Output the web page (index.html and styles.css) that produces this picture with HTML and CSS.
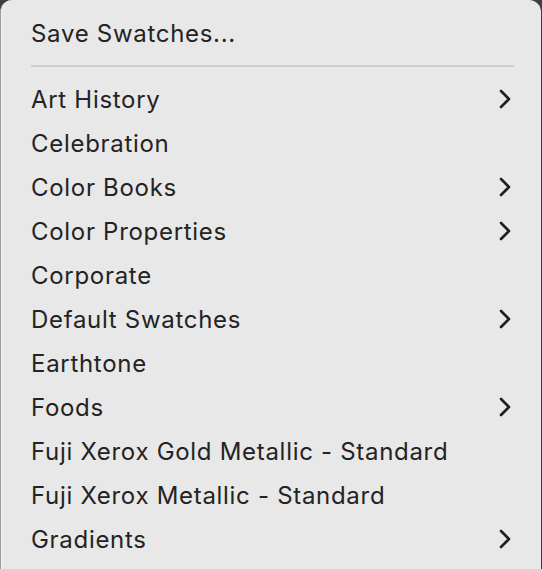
FILE: index.html
```html
<!DOCTYPE html>
<html>
<head>
<meta charset="utf-8">
<link rel="stylesheet" href="styles.css">
</head>
<body>
<div class="menu">
  <div class="item"><span>Save Swatches...</span></div>
  <div class="sep"></div>
  <div class="item"><span>Art History</span><svg class="chev" viewBox="0 0 12 20"><path d="M2 2 L10 10 L2 18"/></svg></div>
  <div class="item"><span>Celebration</span></div>
  <div class="item"><span>Color Books</span><svg class="chev" viewBox="0 0 12 20"><path d="M2 2 L10 10 L2 18"/></svg></div>
  <div class="item"><span>Color Properties</span><svg class="chev" viewBox="0 0 12 20"><path d="M2 2 L10 10 L2 18"/></svg></div>
  <div class="item"><span>Corporate</span></div>
  <div class="item"><span>Default Swatches</span><svg class="chev" viewBox="0 0 12 20"><path d="M2 2 L10 10 L2 18"/></svg></div>
  <div class="item"><span>Earthtone</span></div>
  <div class="item"><span>Foods</span><svg class="chev" viewBox="0 0 12 20"><path d="M2 2 L10 10 L2 18"/></svg></div>
  <div class="item"><span>Fuji Xerox Gold Metallic - Standard</span></div>
  <div class="item"><span>Fuji Xerox Metallic - Standard</span></div>
  <div class="item"><span>Gradients</span><svg class="chev" viewBox="0 0 12 20"><path d="M2 2 L10 10 L2 18"/></svg></div>
</div>
</body>
</html>
```

FILE: styles.css
```css
html, body {
  margin: 0;
  padding: 0;
  background: #3e3e3e;
  overflow: hidden;
  height: 100%;
}
.menu {
  width: 541px;
  height: 100%;
  overflow: hidden;
  box-sizing: border-box;
  background: #e8e8e8;
  border-radius: 12px 12px 0 0;
  border-left: 1px solid #9a9a9a;
  box-shadow: inset 1px 0 0 #f4f4f4;
  padding: 11px 0 0 30px;
  font-family: Inter, "Liberation Sans", sans-serif;
  font-size: 24px;
  letter-spacing: 0.7px;
  color: #232323;
}
.item {
  height: 44px;
  display: flex;
  align-items: center;
  justify-content: space-between;
  padding-right: 30px;
}
.sep {
  height: 22px;
  display: flex;
  align-items: center;
  margin-right: 27px;
}
.sep::before {
  content: "";
  flex: 1;
  height: 2px;
  background: #cdcdcd;
}
.chev {
  width: 12px;
  height: 20px;
  fill: none;
  stroke: #1e1e1e;
  stroke-width: 2.6;
  stroke-linecap: round;
  stroke-linejoin: round;
}
```
